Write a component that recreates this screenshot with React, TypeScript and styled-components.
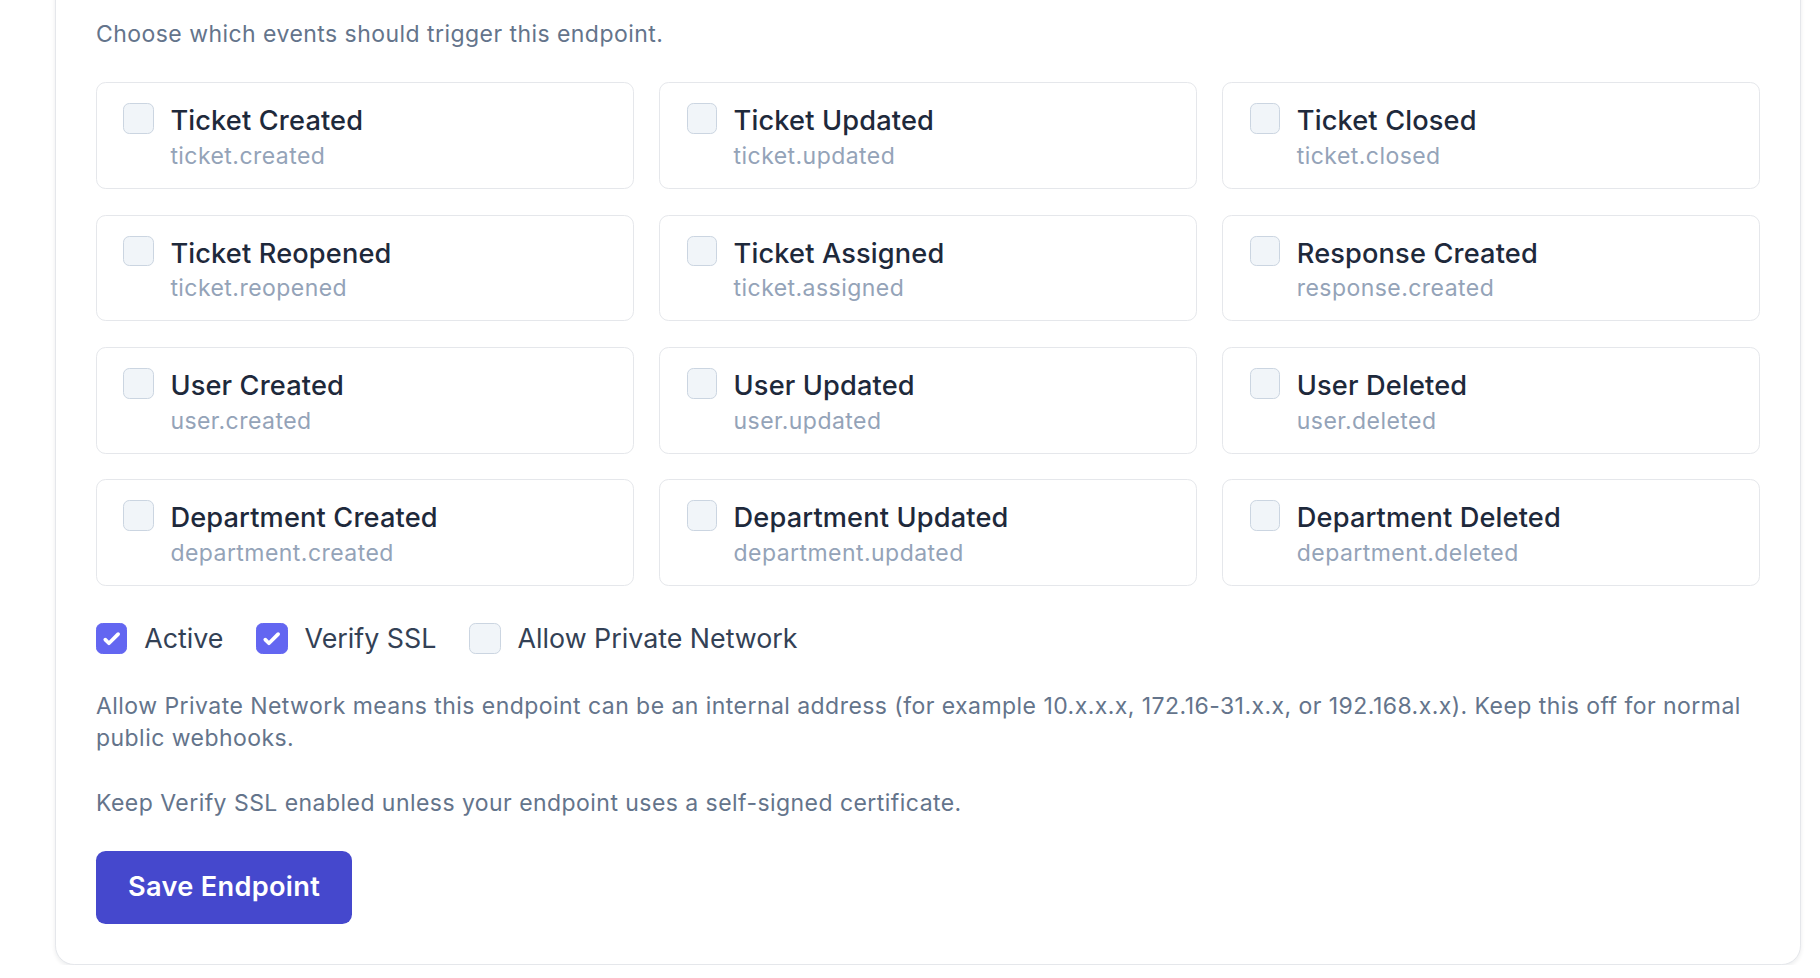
import { useState } from "react";
import styled, { createGlobalStyle } from "styled-components";

const GlobalStyle = createGlobalStyle`
    body {
        margin: 0;
        background: #ffffff;
        font-family: Inter, "Noto Sans", "Liberation Sans", sans-serif;
        -webkit-font-smoothing: antialiased;
    }
`;

const Page = styled.div`
    padding: 0 19px 0 55px;
`;

const Panel = styled.section`
    margin-top: -23.5px;
    padding: 40px;
    background: #ffffff;
    border: 1.6px solid #e5e7eb;
    border-radius: 19.2px;
    box-shadow: 0 1.6px 4px rgba(15, 23, 42, 0.08);
`;

const Intro = styled.p`
    margin: 0;
    font-size: 23px;
    line-height: 32px;
    letter-spacing: 0.45px;
    color: #64748b;
`;

const EventGrid = styled.div`
    display: grid;
    grid-template-columns: repeat(3, 1fr);
    gap: 25.6px;
    margin-top: 32.8px;
`;

const EventCard = styled.label`
    display: flex;
    align-items: flex-start;
    gap: 16.4px;
    padding: 20px 24px 16px 26.4px;
    border: 1.6px solid #e5e7eb;
    border-radius: 9.6px;
    cursor: pointer;
`;

const Box = styled.span<{ $checked: boolean; $size: number }>`
    flex: none;
    display: flex;
    align-items: center;
    justify-content: center;
    box-sizing: border-box;
    width: ${props => props.$size}px;
    height: ${props => props.$size}px;
    border-radius: 6.4px;
    border: 1.6px solid ${props => (props.$checked ? "#6366f1" : "#cbd5e1")};
    background: ${props => (props.$checked ? "#6366f1" : "#f1f5f9")};
`;

const EventText = styled.span`
    display: flex;
    flex-direction: column;
`;

const EventName = styled.span`
    font-size: 27.2px;
    line-height: 35.2px;
    font-weight: 500;
    letter-spacing: 0.15px;
    color: #1e293b;
`;

const EventKey = styled.span`
    margin-top: 1.6px;
    font-size: 23px;
    line-height: 32px;
    letter-spacing: 0.45px;
    color: #94a3b8;
`;

const ToggleRow = styled.div`
    display: flex;
    align-items: center;
    gap: 33px;
    margin-top: 32.8px;
`;

const Toggle = styled.label`
    display: flex;
    align-items: center;
    gap: 16.8px;
    font-size: 26.8px;
    line-height: 38.4px;
    color: #334155;
    cursor: pointer;
`;

const Note = styled.p`
    margin: 32.8px 0 0;
    font-size: 23px;
    line-height: 32px;
    letter-spacing: 0.45px;
    color: #64748b;
`;

const SaveButton = styled.button`
    display: block;
    margin-top: 32px;
    padding: 17.4px 32px;
    border: none;
    border-radius: 9.6px;
    background: #4548cd;
    color: #ffffff;
    font-family: inherit;
    font-size: 27.2px;
    line-height: 38.4px;
    font-weight: 600;
    letter-spacing: 0.3px;
    cursor: pointer;
`;

const events = [
    { name: "Ticket Created", key: "ticket.created" },
    { name: "Ticket Updated", key: "ticket.updated" },
    { name: "Ticket Closed", key: "ticket.closed" },
    { name: "Ticket Reopened", key: "ticket.reopened" },
    { name: "Ticket Assigned", key: "ticket.assigned" },
    { name: "Response Created", key: "response.created" },
    { name: "User Created", key: "user.created" },
    { name: "User Updated", key: "user.updated" },
    { name: "User Deleted", key: "user.deleted" },
    { name: "Department Created", key: "department.created" },
    { name: "Department Updated", key: "department.updated" },
    { name: "Department Deleted", key: "department.deleted" },
];

// check glyph fills the whole box, like a forms-plugin background image
const CheckBox = ({ checked, size }: { checked: boolean; size: number }) => (
    <Box $checked={checked} $size={size} role="checkbox" aria-checked={checked}>
        {checked && (
            <svg width={size} height={size} viewBox="0 0 16 16" fill="#ffffff">
                <path d="M12.207 4.793a1 1 0 010 1.414l-5 5a1 1 0 01-1.414 0l-2-2a1 1 0 011.414-1.414L6.5 9.086l4.293-4.293a1 1 0 011.414 0z" />
            </svg>
        )}
    </Box>
);

const App = () => {
    const [selected, setSelected] = useState<string[]>([]);
    const [flags, setFlags] = useState({ active: true, verifySsl: true, allowPrivate: false });

    const toggleEvent = (key: string) =>
        setSelected(prev => (prev.includes(key) ? prev.filter(k => k !== key) : [...prev, key]));

    const toggleFlag = (name: keyof typeof flags) =>
        setFlags(prev => ({ ...prev, [name]: !prev[name] }));

    return (
        <Page>
            <GlobalStyle />
            <Panel>
                <Intro>Choose which events should trigger this endpoint.</Intro>
                <EventGrid>
                    {events.map(event => (
                        <EventCard key={event.key} onClick={() => toggleEvent(event.key)}>
                            <CheckBox checked={selected.includes(event.key)} size={30.6} />
                            <EventText>
                                <EventName>{event.name}</EventName>
                                <EventKey>{event.key}</EventKey>
                            </EventText>
                        </EventCard>
                    ))}
                </EventGrid>
                <ToggleRow>
                    <Toggle onClick={() => toggleFlag("active")}>
                        <CheckBox checked={flags.active} size={31.4} />
                        Active
                    </Toggle>
                    <Toggle onClick={() => toggleFlag("verifySsl")}>
                        <CheckBox checked={flags.verifySsl} size={31.4} />
                        Verify SSL
                    </Toggle>
                    <Toggle onClick={() => toggleFlag("allowPrivate")}>
                        <CheckBox checked={flags.allowPrivate} size={31.4} />
                        Allow Private Network
                    </Toggle>
                </ToggleRow>
                <Note>
                    Allow Private Network means this endpoint can be an internal address (for example 10.x.x.x,
                    172.16-31.x.x, or 192.168.x.x). Keep this off for normal public webhooks.
                </Note>
                <Note>Keep Verify SSL enabled unless your endpoint uses a self-signed certificate.</Note>
                <SaveButton type="button">Save Endpoint</SaveButton>
            </Panel>
        </Page>
    );
};

export default App;
